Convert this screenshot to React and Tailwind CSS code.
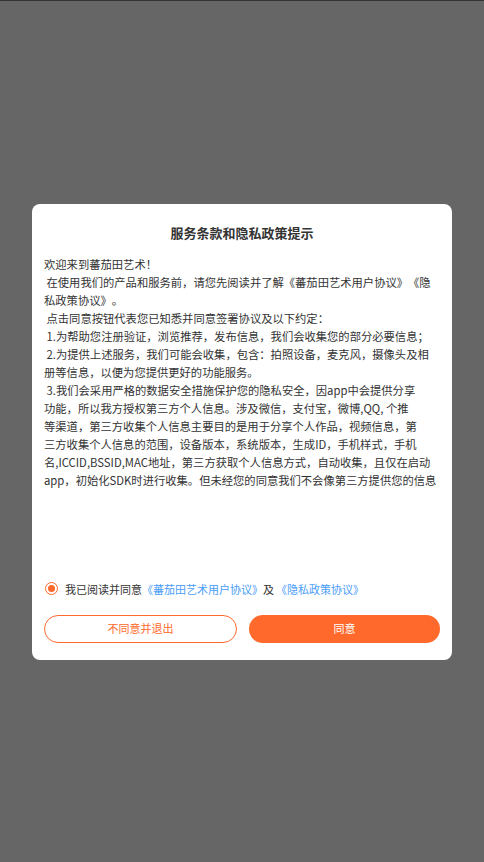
import React, { useState } from 'react';

const lines = [
    '欢迎来到蕃茄田艺术！',
    ' 在使用我们的产品和服务前，请您先阅读并了解《蕃茄田艺术用户协议》《隐',
    '私政策协议》。',
    ' 点击同意按钮代表您已知悉并同意签署协议及以下约定：',
    ' 1.为帮助您注册验证，浏览推荐，发布信息，我们会收集您的部分必要信息；',
    ' 2.为提供上述服务，我们可能会收集，包含：拍照设备，麦克风，摄像头及相',
    '册等信息，以便为您提供更好的功能服务。',
    ' 3.我们会采用严格的数据安全措施保护您的隐私安全，因app中会提供分享',
    '功能，所以我方授权第三方个人信息。涉及微信，支付宝，微博,QQ, 个推',
    '等渠道，第三方收集个人信息主要目的是用于分享个人作品，视频信息，第',
    '三方收集个人信息的范围，设备版本，系统版本，生成ID，手机样式，手机',
    '名,ICCID,BSSID,MAC地址，第三方获取个人信息方式，自动收集，且仅在启动',
    'app，初始化SDK时进行收集。但未经您的同意我们不会像第三方提供您的信息',
];

const App = () => {
    const [checked, setChecked] = useState(true);

    return (
        <div
            className="min-h-[862px] bg-[#666666] border-t border-[#333333] flex items-center justify-center px-8"
            style={{ fontFamily: '"Noto Sans CJK SC", "Noto Sans", sans-serif' }}
        >
            <div className="w-[420px] bg-white rounded-lg px-3 pt-[17px] pb-[17px] flex flex-col">
                {/* 标题 */}
                <h1 className="text-[13px] font-bold text-[#333333] text-center leading-6">
                    服务条款和隐私政策提示
                </h1>

                {/* 协议正文 */}
                <div className="mt-[10px] h-[326px] text-[11.3px] leading-[18px] text-[#333333] [text-spacing-trim:space-all]">
                    {lines.map((line, i) => (
                        <p key={i} className="whitespace-pre">{line}</p>
                    ))}
                </div>

                {/* 勾选 */}
                <div className="flex items-center gap-[7px] pl-[1px] text-[11px] leading-4">
                    <button
                        onClick={() => setChecked(!checked)}
                        className="w-[13px] h-[13px] rounded-full border-[1.5px] border-[#ff6a2c] flex items-center justify-center"
                    >
                        {checked && <span className="w-[7px] h-[7px] rounded-full bg-[#ff6a2c]" />}
                    </button>
                    <p className="text-[#333333] whitespace-pre">
                        我已阅读并同意<span className="text-[#4a9df8]">《蕃茄田艺术用户协议》</span>及<span className="text-[#4a9df8] ml-[2px]">《隐私政策协议》</span>
                    </p>
                </div>

                {/* 按钮 */}
                <div className="mt-[18px] flex gap-3">
                    <button className="flex-1 h-[28px] rounded-full border border-[#ff6a2c] text-[#ff6a2c] text-[11px]">
                        不同意并退出
                    </button>
                    <button className="flex-1 h-[28px] rounded-full bg-[#ff6a2c] text-white text-[11px]">
                        同意
                    </button>
                </div>
            </div>
        </div>
    );
};

export default App;
